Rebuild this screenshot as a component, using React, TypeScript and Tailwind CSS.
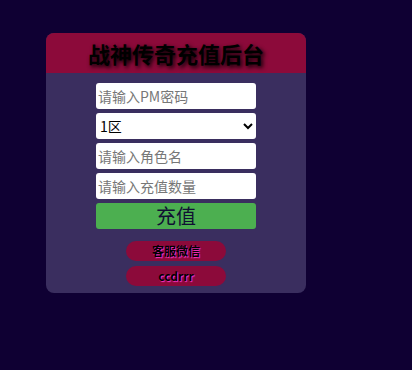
import React from "react";

export default function App() {
  const font = { fontFamily: '"Noto Sans CJK SC", "Noto Sans", sans-serif' };
  return (
    <div className="w-[412px] h-[370px] bg-[#0f0033] pt-[33px] pl-[46px]" style={font}>
      <div className="w-[260px] h-[260px] bg-[#3a2e5f] rounded-[8px] overflow-hidden flex flex-col items-center">
        <div className="w-full h-[40px] bg-[#8c0a3a] flex items-center justify-center">
          <span className="text-[22px] font-bold text-black leading-none [text-shadow:2px_2px_4px_#000]">
            战神传奇充值后台
          </span>
        </div>
        <div className="flex flex-col items-center gap-[4px] mt-[10px]">
          <input
            className="w-[160px] h-[26px] bg-white rounded-[3px] px-[2px] text-[14px] text-black placeholder:text-[#777] outline-none"
            placeholder="请输入PM密码"
          />
          <select className="w-[160px] h-[26px] bg-white rounded-[3px] text-[14px] text-black outline-none">
            <option>1区</option>
          </select>
          <input
            className="w-[160px] h-[26px] bg-white rounded-[3px] px-[2px] text-[14px] text-black placeholder:text-[#777] outline-none"
            placeholder="请输入角色名"
          />
          <input
            className="w-[160px] h-[26px] bg-white rounded-[3px] px-[2px] text-[14px] text-black placeholder:text-[#777] outline-none"
            placeholder="请输入充值数量"
          />
          <button className="w-[160px] h-[26px] bg-[#4caf50] rounded-[3px] text-[20px] leading-none text-[#111133] flex items-center justify-center">
            充值
          </button>
        </div>
        <div className="flex flex-col items-center gap-[5px] mt-[12px]">
          <div className="w-[100px] h-[20px] rounded-[10px] bg-[#8c0a3a] flex items-center justify-center text-[12px] font-bold text-black leading-none [text-shadow:1px_1px_1px_#ff33cc]">
            客服微信
          </div>
          <div className="w-[100px] h-[20px] rounded-[10px] bg-[#8c0a3a] flex items-center justify-center text-[12px] font-bold text-black leading-none [text-shadow:1px_1px_1px_#ff33cc]">
            ccdrrr
          </div>
        </div>
      </div>
    </div>
  );
}
